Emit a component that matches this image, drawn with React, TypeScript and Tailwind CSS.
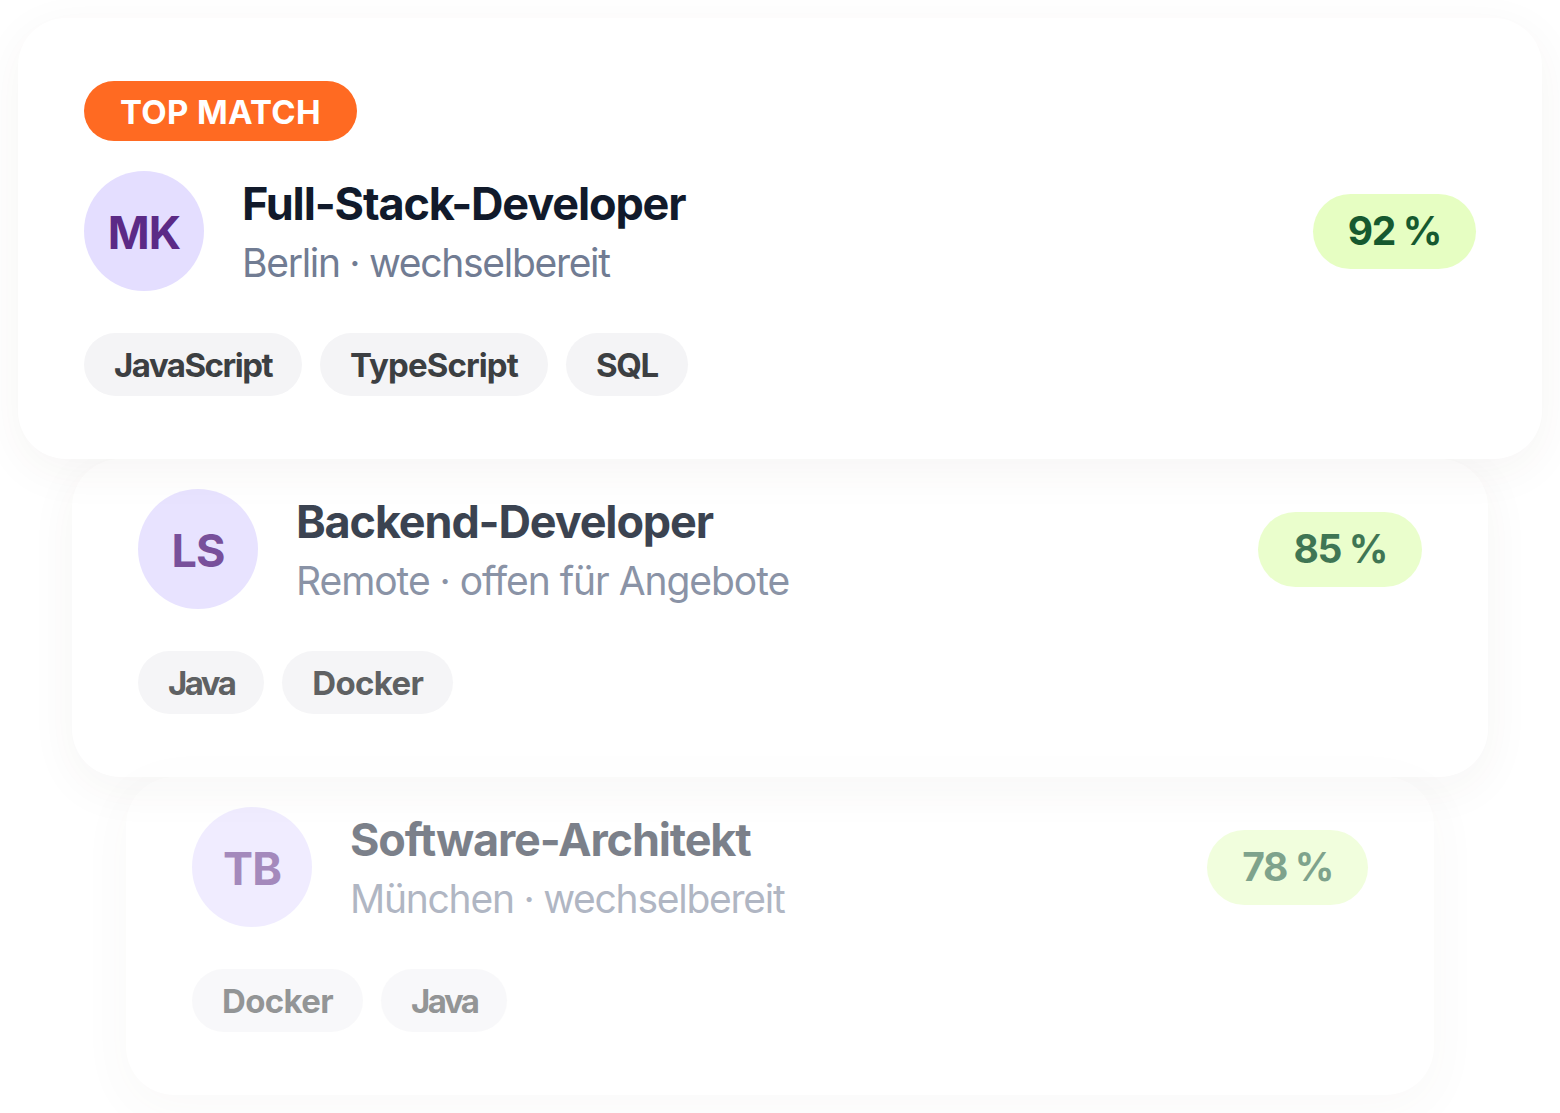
const font = "font-['Inter',sans-serif]";

type Tag = { label: string; track: string };
type Row = {
  initials: string;
  title: string;
  sub: string;
  subTrack: string;
  score: string;
  tags: Tag[];
  wrap: string;
  top?: boolean;
};

const rows: Row[] = [
  {
    initials: "MK",
    title: "Full-Stack-Developer",
    sub: "Berlin · wechselbereit",
    subTrack: "tracking-[-1.3px]",
    score: "92 %",
    tags: [
      { label: "JavaScript", track: "tracking-[-1.5px]" },
      { label: "TypeScript", track: "tracking-[-0.9px]" },
      { label: "SQL", track: "tracking-[-1.3px]" },
    ],
    wrap: "z-30 pt-[63px]",
    top: true,
  },
  {
    initials: "LS",
    title: "Backend-Developer",
    sub: "Remote · offen für Angebote",
    subTrack: "tracking-[-1.05px]",
    score: "85 %",
    tags: [
      { label: "Java", track: "tracking-[-2.55px]" },
      { label: "Docker", track: "tracking-[-0.65px]" },
    ],
    wrap: "z-20 mx-[54px] pt-[30px] opacity-[0.82]",
  },
  {
    initials: "TB",
    title: "Software-Architekt",
    sub: "München · wechselbereit",
    subTrack: "tracking-[-1.25px]",
    score: "78 %",
    tags: [
      { label: "Docker", track: "tracking-[-0.65px]" },
      { label: "Java", track: "tracking-[-2.55px]" },
    ],
    wrap: "z-10 mx-[108px] pt-[30px] opacity-55",
  },
];

function Card({ r }: { r: Row }) {
  return (
    <div className={`relative rounded-[48px] bg-white px-[66px] pb-[63px] shadow-[0_12px_48px_rgba(80,60,40,0.05)] ${r.wrap}`}>
      {r.top && (
        <div className="mb-[30px] flex h-[60px] w-[273px] items-center justify-center rounded-full bg-[#ff6a22] pt-[3px] text-[33px] font-bold tracking-[0.3px] text-white">
          TOP MATCH
        </div>
      )}
      <div className="flex items-center justify-between">
        <div className="flex items-center gap-[38px]">
          <div className="flex h-[120px] w-[120px] items-center justify-center rounded-full bg-[#e4deff] pt-[3px] text-[45px] font-bold tracking-[-1px] text-[#5b2a86]">
            {r.initials}
          </div>
          <div className="h-[120px] pt-[3px]">
            <div className="text-[45px] leading-[59px] font-bold tracking-[-1.15px] text-[#111a2b]">{r.title}</div>
            <div className={`text-[39px] leading-[59px] text-[#717c93] ${r.subTrack}`}>{r.sub}</div>
          </div>
        </div>
        <div className="flex h-[75px] items-center rounded-full bg-[#e6fec2] px-[35px] pt-[1px] text-[39px] font-bold tracking-[-1.4px] text-[#16592f]">
          {r.score}
        </div>
      </div>
      <div className="mt-[42px] flex gap-[18px]">
        {r.tags.map((t) => (
          <div key={t.label} className={`flex h-[63px] items-center rounded-full bg-[#f4f4f6] pt-[3px] pr-[30px] pl-[30px] text-[33px] font-bold text-[#3c3f42] ${t.track}`}>
            {t.label}
          </div>
        ))}
      </div>
    </div>
  );
}

export default function App() {
  return (
    <div className={`flex min-h-[1113px] flex-col overflow-hidden bg-white px-[18px] pt-[18px] ${font}`}>
      {rows.map((r) => (
        <Card key={r.title} r={r} />
      ))}
    </div>
  );
}
